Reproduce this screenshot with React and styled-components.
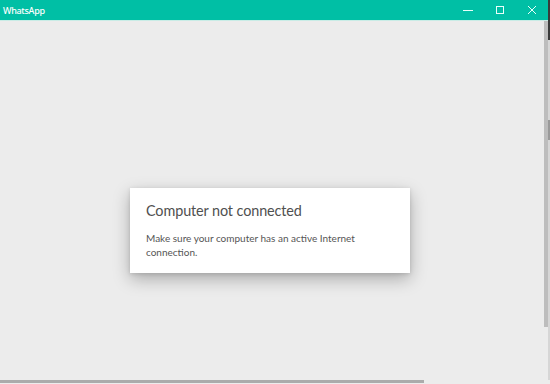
import React from 'react'
import styled, { createGlobalStyle } from 'styled-components'

const GlobalStyle = createGlobalStyle`
  html, body {
    margin: 0;
    padding: 0;
    background: #ececec;
  }
  body {
    font-family: "Noto Sans", "Open Sans", Arial, sans-serif;
  }
`

const Screen = styled.div`
  width: 550px;
  height: 384px;
  display: flex;
  flex-direction: column;
  overflow: hidden;
  background: #ececec;
`

const Top = styled.div`
  display: flex;
  height: 380px;
`

const Window = styled.div`
  display: flex;
  flex-direction: column;
  width: 548px;
`

const Edge = styled.div`
  width: 2px;
  display: flex;
  flex-direction: column;
  background: #d6d6d6;
`

const EdgeMark = styled.div`
  height: ${p => p.h}px;
  margin-top: ${p => p.top}px;
  background: ${p => p.color};
`

const TitleBar = styled.div`
  height: 20px;
  flex: none;
  background: #00bfa5;
  display: flex;
  align-items: center;
  justify-content: space-between;
  border-bottom: 1px solid #c9ece6;
`

const AppName = styled.span`
  color: #ffffff;
  font-family: "Noto Sans", Arial, sans-serif;
  font-size: 9px;
  font-weight: 500;
  padding-left: 3px;
  letter-spacing: -0.3px;
`

const Controls = styled.div`
  display: flex;
  height: 100%;
`

const ControlButton = styled.div`
  width: 32px;
  height: 100%;
  display: flex;
  align-items: center;
  justify-content: center;
  color: #e8fffa;
`

const Body = styled.div`
  flex: 1;
  display: flex;
`

const Content = styled.div`
  flex: 1;
  display: flex;
  justify-content: center;
  padding-top: 167px;
  padding-right: 4px;
`

const ScrollStrip = styled.div`
  width: 4px;
  display: flex;
  flex-direction: column;
`

const ScrollThumb = styled.div`
  height: 306px;
  background: #bdbdbd;
`

const Dialog = styled.div`
  width: 280px;
  height: 85px;
  box-sizing: border-box;
  background: #ffffff;
  padding: 14px 16px;
  box-shadow: 0 6px 16px rgba(0, 0, 0, 0.28), 0 1px 4px rgba(0, 0, 0, 0.12);
  color: #4a4a4a;
  font-family: Lato, "Noto Sans", Arial, sans-serif;
`

const DialogTitle = styled.div`
  font-size: 14.4px;
  line-height: 18px;
  color: #505050;
  margin-bottom: 11px;
  letter-spacing: -0.1px;
`

const DialogText = styled.div`
  font-size: 10px;
  line-height: 14px;
  color: #555555;
  width: 230px;
`

const BottomRail = styled.div`
  height: 4px;
  display: flex;
  flex: none;
`

const RailThumb = styled.div`
  width: 424px;
  height: 3px;
  background: #ababab;
`

const Icon = ({ type }) => {
  if (type === 'min') {
    return (
      <svg width="10" height="10" viewBox="0 0 10 10">
        <path d="M0 5.5H10" stroke="currentColor" strokeWidth="1" />
      </svg>
    )
  }
  if (type === 'max') {
    return (
      <svg width="10" height="10" viewBox="0 0 10 10">
        <rect x="1.5" y="1.5" width="7" height="7" fill="none" stroke="currentColor" strokeWidth="1" />
      </svg>
    )
  }
  return (
    <svg width="10" height="10" viewBox="0 0 10 10">
      <path d="M1 1L9 9M9 1L1 9" stroke="currentColor" strokeWidth="1" />
    </svg>
  )
}

export default function App() {
  return (
    <>
      <GlobalStyle />
      <Screen>
        <Top>
          <Window>
            <TitleBar>
              <AppName>WhatsApp</AppName>
              <Controls>
                <ControlButton><Icon type="min" /></ControlButton>
                <ControlButton><Icon type="max" /></ControlButton>
                <ControlButton><Icon type="close" /></ControlButton>
              </Controls>
            </TitleBar>
            <Body>
              <Content>
                <Dialog>
                  <DialogTitle>Computer not connected</DialogTitle>
                  <DialogText>
                    Make sure your computer has an active Internet connection.
                  </DialogText>
                </Dialog>
              </Content>
              <ScrollStrip>
                <ScrollThumb />
              </ScrollStrip>
            </Body>
          </Window>
          <Edge>
            <EdgeMark top={0} h={40} color="#3a3a3a" />
            <EdgeMark top={80} h={20} color="#9a9a9a" />
          </Edge>
        </Top>
        <BottomRail>
          <RailThumb />
        </BottomRail>
      </Screen>
    </>
  )
}
